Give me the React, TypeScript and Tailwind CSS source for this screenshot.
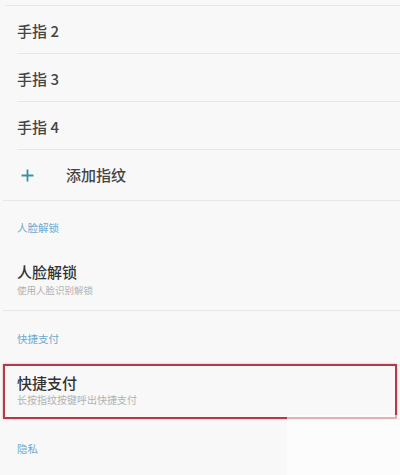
import React from "react";

const font = { fontFamily: '"Noto Sans CJK SC", "Noto Sans", sans-serif' };

function FingerRow({ label }: { label: string }) {
  return (
    <div className="ml-[17px] h-[48px] border-b border-[#e7e7e7] flex items-center pt-[4px] text-[15px] font-medium text-[#444]">
      {label}
    </div>
  );
}

export default function App() {
  return (
    <div className="relative w-[400px] h-[475px] overflow-hidden bg-[#f8f8f8]" style={font}>
      <div className="h-[5px]" />
      <div className="ml-[5px] h-px bg-[#e7e7e7]" />
      <FingerRow label="手指 2" />
      <FingerRow label="手指 3" />
      <FingerRow label="手指 4" />
      <div className="h-[50px] flex items-center">
        <svg className="ml-[21px]" width="13" height="13" viewBox="0 0 13 13">
          <path d="M6.5 0.5v12M0.5 6.5h12" stroke="#3b8fa9" strokeWidth="1.8" />
        </svg>
        <span className="ml-[32px] text-[15px] font-medium text-[#444]">添加指纹</span>
      </div>
      <div className="ml-[3px] h-px bg-[#e7e7e7]" />
      <div className="h-[51px] flex items-center pt-[3px] pl-[17px] text-[10.5px] text-[#6ea9cf]">人脸解锁</div>
      <div className="h-[58px] pl-[17px] pt-[10px]">
        <div className="text-[15px] leading-[20px] font-medium text-[#333]">人脸解锁</div>
        <div className="text-[9.5px] leading-[14px] mt-[1px] text-[#b2b2b2]">使用人脸识别解锁</div>
      </div>
      <div className="ml-[3px] h-px bg-[#e7e7e7]" />
      <div className="h-[53px] flex items-center pt-[3px] pl-[17px] text-[10.5px] text-[#6ea9cf]">快捷支付</div>
      <div className="mx-[3px] h-[55px] border-2 border-[#b53a45] shadow-[0_0_2px_rgba(200,60,60,0.45)] pl-[12px] pt-[7px]">
        <div className="text-[15px] leading-[20px] font-medium text-[#333]">快捷支付</div>
        <div className="text-[10px] leading-[14px] text-[#b2b2b2]">长按指纹按键呼出快捷支付</div>
      </div>
      <div className="h-[56px] flex items-center pt-[4px] pl-[17px] text-[10.5px] text-[#6ea9cf]">隐私</div>
      <div className="absolute left-[287px] top-[415px] w-[113px] h-[60px] bg-white/60" />
    </div>
  );
}
